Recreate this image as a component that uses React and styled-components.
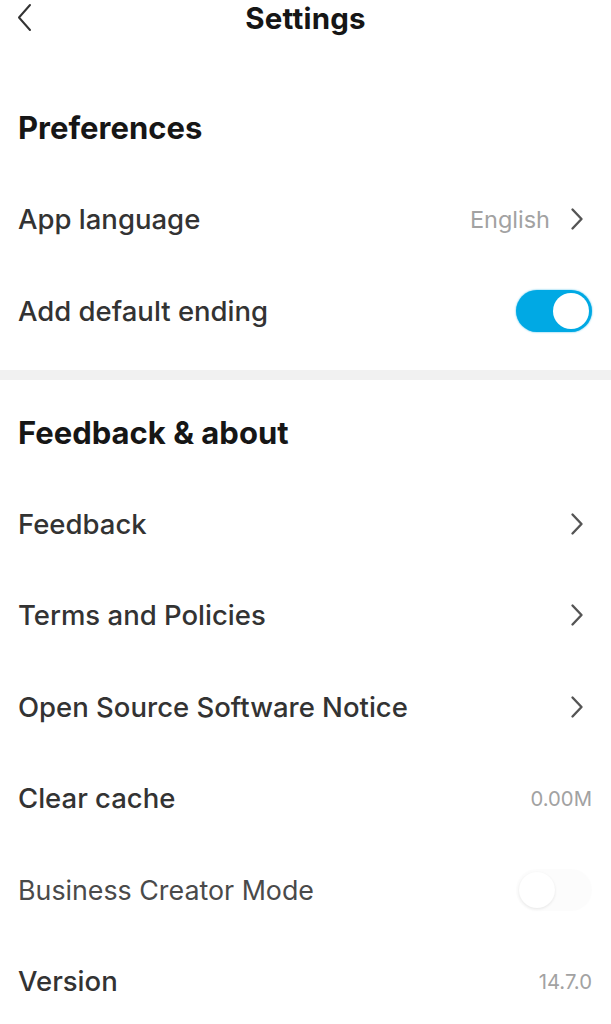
import React from "react";
import styled, { createGlobalStyle } from "styled-components";

const GlobalStyle = createGlobalStyle`
  html, body {
    margin: 0;
    padding: 0;
    background: #ffffff;
  }
  body {
    font-family: "Inter", "Noto Sans", sans-serif;
    -webkit-font-smoothing: antialiased;
  }
`;

const Page = styled.div`
  width: 611px;
  min-height: 1024px;
  background: #ffffff;
  overflow: hidden;
`;

const Header = styled.div`
  position: relative;
  display: flex;
  align-items: center;
  justify-content: center;
  height: 36px;
`;

const BackButton = styled.button`
  position: absolute;
  left: 12px;
  top: 0;
  height: 36px;
  width: 24px;
  padding: 0;
  border: none;
  background: none;
  display: flex;
  align-items: center;
  justify-content: center;
`;

const Title = styled.h1`
  margin: 0;
  font-size: 29.5px;
  font-weight: 700;
  color: #161616;
  letter-spacing: 0.2px;
`;

const Section = styled.section`
  padding-top: ${(p) => p.$top}px;
  padding-bottom: ${(p) => p.$bottom}px;
`;

const SectionTitle = styled.h2`
  margin: 0;
  height: 91.5px;
  display: flex;
  align-items: center;
  padding: 0 18px;
  font-size: 31px;
  font-weight: 700;
  color: #161616;
`;

const Divider = styled.div`
  height: 10px;
  background: #f1f1f1;
`;

const Row = styled.div`
  height: 91.5px;
  display: flex;
  align-items: center;
  justify-content: space-between;
  padding: 0 ${(p) => (p.$chevron ? 27 : 19)}px 0 18px;
`;

const Label = styled.span`
  font-size: ${(p) => (p.$muted ? 26.8 : 27.5)}px;
  font-weight: ${(p) => (p.$muted ? 400 : 500)};
  color: ${(p) => (p.$muted ? "#4a4a4a" : "#333333")};
`;

const Right = styled.div`
  display: flex;
  align-items: center;
  gap: 20px;
`;

const Value = styled.span`
  font-size: ${(p) => p.$size || 23.5}px;
  font-weight: 400;
  color: #a2a2a2;
`;

const Toggle = styled.div`
  position: relative;
  width: 76px;
  height: 42px;
  border-radius: 21px;
  background: ${(p) => (p.$on ? "#00a9e4" : "#f8f8f8")};
  opacity: ${(p) => (p.$disabled ? 0.3 : 1)};
  box-shadow: ${(p) => (p.$on ? "0 0 2px rgba(0, 169, 228, 0.8)" : "none")};
`;

const Knob = styled.div`
  position: absolute;
  top: 3px;
  left: ${(p) => (p.$on ? 37 : 3)}px;
  width: 36px;
  height: 36px;
  border-radius: 50%;
  background: #ffffff;
  box-shadow: ${(p) =>
    p.$on ? "none" : "0 1px 3px rgba(0, 0, 0, 0.3)"};
`;

const Chevron = () => (
  <svg width="14" height="24" viewBox="0 0 14 24" fill="none">
    <path
      d="M2.5 2.5 L11.5 12 L2.5 21.5"
      stroke="#555555"
      strokeWidth="2.4"
      strokeLinecap="round"
      strokeLinejoin="round"
    />
  </svg>
);

const BackIcon = () => (
  <svg width="15" height="30" viewBox="0 0 15 30" fill="none">
    <path
      d="M13 2 L2 14.5 L13 27"
      stroke="#333333"
      strokeWidth="2"
      strokeLinecap="round"
      strokeLinejoin="round"
    />
  </svg>
);

export default function App() {
  return (
    <Page>
      <GlobalStyle />
      <Header>
        <BackButton aria-label="Back">
          <BackIcon />
        </BackButton>
        <Title>Settings</Title>
      </Header>

      <Section $top={46} $bottom={13}>
        <SectionTitle>Preferences</SectionTitle>
        <Row $chevron>
          <Label>App language</Label>
          <Right>
            <Value>English</Value>
            <Chevron />
          </Right>
        </Row>
        <Row>
          <Label>Add default ending</Label>
          <Toggle $on>
            <Knob $on />
          </Toggle>
        </Row>
      </Section>

      <Divider />

      <Section $top={7} $bottom={0}>
        <SectionTitle>Feedback &amp; about</SectionTitle>
        <Row $chevron>
          <Label>Feedback</Label>
          <Chevron />
        </Row>
        <Row $chevron>
          <Label>Terms and Policies</Label>
          <Chevron />
        </Row>
        <Row $chevron>
          <Label>Open Source Software Notice</Label>
          <Chevron />
        </Row>
        <Row>
          <Label>Clear cache</Label>
          <Value $size={20.3}>0.00M</Value>
        </Row>
        <Row>
          <Label $muted>Business Creator Mode</Label>
          <Toggle $disabled>
            <Knob />
          </Toggle>
        </Row>
        <Row>
          <Label>Version</Label>
          <Value $size={20.3}>14.7.0</Value>
        </Row>
      </Section>
    </Page>
  );
}
